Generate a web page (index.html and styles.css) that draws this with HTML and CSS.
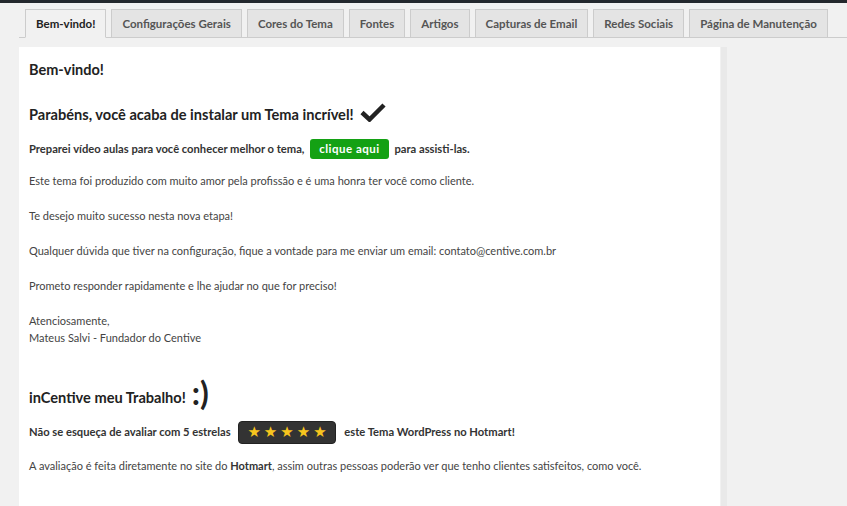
FILE: index.html
```html
<!DOCTYPE html>
<html lang="pt-BR">
<head>
    <meta charset="UTF-8">
    <meta name="viewport" content="width=device-width, initial-scale=1.0">
    <title>Bem-vindo - Centive</title>
    <link rel="stylesheet" href="styles.css">
</head>
<body>
    <div class="topbar"></div>
    <div class="wrap">
        <nav class="tabs">
            <a class="tab active" href="#">Bem-vindo!</a>
            <a class="tab" href="#">Configurações Gerais</a>
            <a class="tab" href="#">Cores do Tema</a>
            <a class="tab" href="#">Fontes</a>
            <a class="tab" href="#">Artigos</a>
            <a class="tab" href="#">Capturas de Email</a>
            <a class="tab" href="#">Redes Sociais</a>
            <a class="tab" href="#">Página de Manutenção</a>
        </nav>

        <div class="layout">
            <div class="panel">
                <h2 class="title">Bem-vindo!</h2>

                <h3 class="subtitle">
                    Parabéns, você acaba de instalar um Tema incrível!
                    <svg class="check" width="26" height="20" viewBox="0 0 26 20">
                        <path d="M2 10.5 L9.5 17.5 L24 3" fill="none" stroke="#222" stroke-width="4.5" stroke-linejoin="miter"/>
                    </svg>
                </h3>
                <p class="strong">Preparei vídeo aulas para você conhecer melhor o tema, <a class="btn-green" href="#">clique aqui</a> para assisti-las.</p>

                <p>Este tema foi produzido com muito amor pela profissão e é uma honra ter você como cliente.</p>
                <p>Te desejo muito sucesso nesta nova etapa!</p>
                <p>Qualquer dúvida que tiver na configuração, fique a vontade para me enviar um email: contato@centive.com.br</p>
                <p>Prometo responder rapidamente e lhe ajudar no que for preciso!</p>
                <p>Atenciosamente,<br>Mateus Salvi - Fundador do Centive</p>

                <h3 class="subtitle incentive">inCentive meu Trabalho! <span class="smile">:)</span></h3>
                <p class="strong">Não se esqueça de avaliar com 5 estrelas <a class="stars" href="#">★★★★★</a> este Tema WordPress no Hotmart!</p>
                <p>A avaliação é feita diretamente no site do <b>Hotmart</b>, assim outras pessoas poderão ver que tenho clientes satisfeitos, como você.</p>
            </div>
            <div class="side"></div>
        </div>
    </div>
</body>
</html>
```

FILE: styles.css
```css
body {
    margin: 0;
    background: #f1f1f1;
    font-family: Lato, "Noto Sans", Arial, sans-serif;
    color: #444;
    font-size: 11px;
}
.topbar {
    height: 3px;
    background: #23282d;
}
.wrap {
    padding-left: 19px;
}
.tabs {
    display: flex;
    gap: 5px;
    padding: 6px 0 0 6px;
    border-bottom: 1px solid #ccc;
}
.tab {
    display: block;
    padding: 0 10px;
    height: 27px;
    line-height: 27px;
    margin-bottom: -1px;
    border: 1px solid #ccc;
    background: #e4e4e4;
    color: #555;
    font-size: 11.5px;
    font-weight: 700;
    text-decoration: none;
    white-space: nowrap;
}
.tab.active {
    background: #f1f1f1;
    border-bottom-color: #f1f1f1;
    color: #222;
}
.layout {
    display: flex;
    margin-top: 9px;
}
.panel {
    width: 681px;
    min-height: 460px;
    background: #fff;
    padding: 7px 10px 20px 10px;
}
.side {
    width: 6px;
    margin-left: 1px;
    background: #e9e9e9;
}
.title {
    font-size: 14.5px;
    font-weight: 700;
    color: #222;
    margin: 7px 0 28px;
}
.subtitle {
    display: flex;
    align-items: center;
    gap: 6px;
    font-size: 14.6px;
    font-weight: 700;
    color: #222;
    margin: 0 0 16px;
}
.check {
    margin-top: -6px;
}
p {
    margin: 0 0 18px;
    line-height: 17px;
    color: #444;
}
p.strong {
    font-weight: 700;
    color: #333;
    font-size: 11.2px;
    margin-bottom: 13px;
}
.btn-green {
    display: inline-block;
    background: #14a114;
    color: #fff;
    padding: 1px 9px 2px;
    margin: 0 3px;
    border-radius: 3px;
    font-size: 11.5px;
    font-weight: 700;
    letter-spacing: 0.5px;
    text-decoration: none;
}
.incentive {
    margin-top: 40px;
    margin-bottom: 13px;
}
.smile {
    font-size: 32px;
    line-height: 30px;
    margin-top: -8px;
}
.stars {
    display: inline-block;
    background: #333;
    color: #f7c51e;
    padding: 3px 5px 3px 8px;
    margin: 0 6px 0 5px;
    border-radius: 4px;
    border: 1px solid #222;
    font-family: "DejaVu Sans", sans-serif;
    font-size: 15px;
    line-height: 15px;
    letter-spacing: 3px;
    text-decoration: none;
    vertical-align: -1px;
}
b {
    font-weight: 700;
    color: #333;
}
```
